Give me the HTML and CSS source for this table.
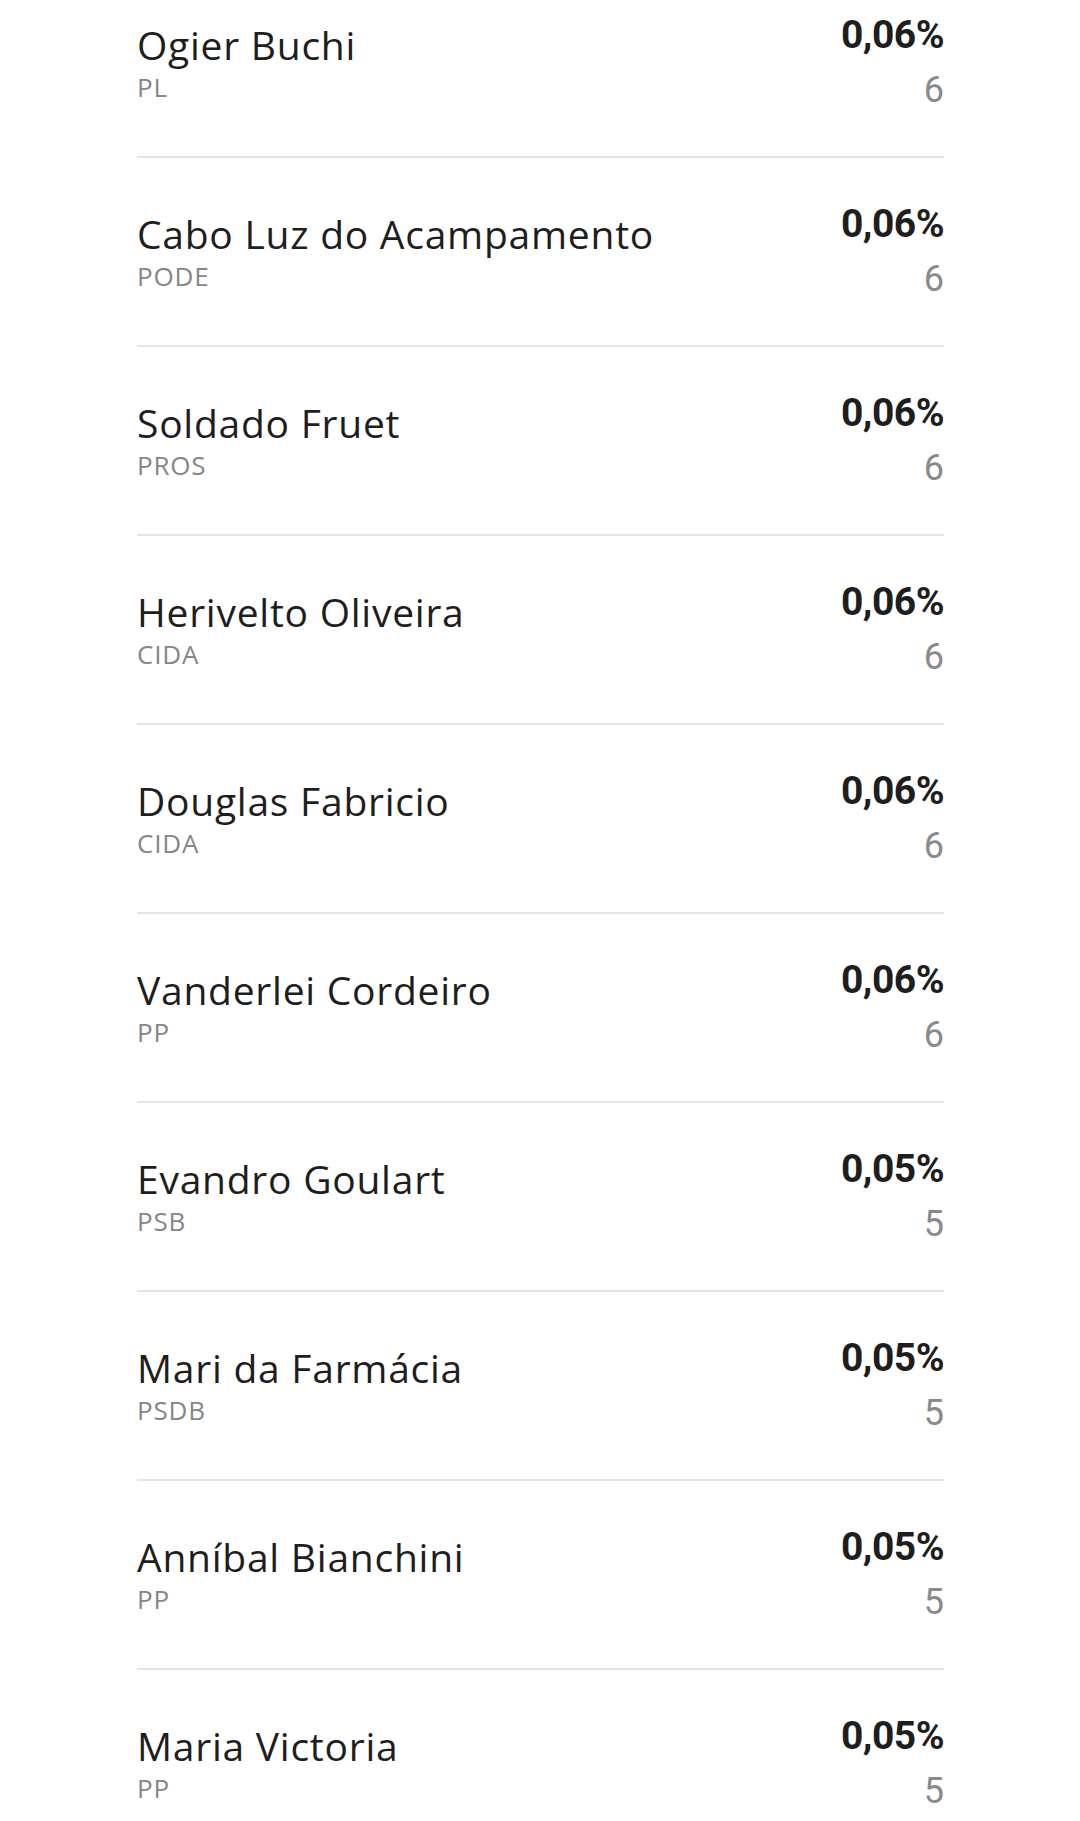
FILE: index.html
```html
<!DOCTYPE html>
<html lang="pt-BR">
<head>
<meta charset="utf-8">
<title>Resultados</title>
<link rel="stylesheet" href="styles.css">
</head>
<body>
<ul class="list">
  <li class="row"><div class="who"><div class="name">Ogier Buchi</div><div class="party">PL</div></div><div class="nums"><div class="pct">0,06%</div><div class="votes">6</div></div></li>
  <li class="row"><div class="who"><div class="name">Cabo Luz do Acampamento</div><div class="party">PODE</div></div><div class="nums"><div class="pct">0,06%</div><div class="votes">6</div></div></li>
  <li class="row"><div class="who"><div class="name">Soldado Fruet</div><div class="party">PROS</div></div><div class="nums"><div class="pct">0,06%</div><div class="votes">6</div></div></li>
  <li class="row"><div class="who"><div class="name">Herivelto Oliveira</div><div class="party">CIDA</div></div><div class="nums"><div class="pct">0,06%</div><div class="votes">6</div></div></li>
  <li class="row"><div class="who"><div class="name">Douglas Fabricio</div><div class="party">CIDA</div></div><div class="nums"><div class="pct">0,06%</div><div class="votes">6</div></div></li>
  <li class="row"><div class="who"><div class="name">Vanderlei Cordeiro</div><div class="party">PP</div></div><div class="nums"><div class="pct">0,06%</div><div class="votes">6</div></div></li>
  <li class="row"><div class="who"><div class="name">Evandro Goulart</div><div class="party">PSB</div></div><div class="nums"><div class="pct">0,05%</div><div class="votes">5</div></div></li>
  <li class="row"><div class="who"><div class="name">Mari da Farmácia</div><div class="party">PSDB</div></div><div class="nums"><div class="pct">0,05%</div><div class="votes">5</div></div></li>
  <li class="row"><div class="who"><div class="name">Anníbal Bianchini</div><div class="party">PP</div></div><div class="nums"><div class="pct">0,05%</div><div class="votes">5</div></div></li>
  <li class="row"><div class="who"><div class="name">Maria Victoria</div><div class="party">PP</div></div><div class="nums"><div class="pct">0,05%</div><div class="votes">5</div></div></li>
</ul>
</body>
</html>
```

FILE: styles.css
```css
html, body {
  margin: 0;
  padding: 0;
  background: #ffffff;
  overflow: hidden;
}
body {
  font-family: "Open Sans", "Noto Sans", sans-serif;
}
.list {
  list-style: none;
  margin: -31px 136px 0 137px;
  padding: 0;
}
.row {
  display: flex;
  justify-content: space-between;
  align-items: flex-start;
  height: 187px;
  box-sizing: content-box;
  border-bottom: 2px solid #e4e4e4;
}
.who {
  padding-top: 53px;
}
.name {
  font-size: 39px;
  line-height: 46px;
  color: #1e1e1e;
  letter-spacing: 0.75px;
  white-space: nowrap;
}
.party {
  margin-top: 4px;
  font-size: 26px;
  line-height: 30px;
  color: #868686;
  letter-spacing: 0.8px;
}
.nums {
  padding-top: 43px;
  text-align: right;
  font-family: Roboto, "Liberation Sans", sans-serif;
}
.pct {
  font-size: 39px;
  line-height: 46px;
  font-weight: 700;
  color: #1e1e1e;
  letter-spacing: -0.5px;
}
.votes {
  margin-top: 12px;
  font-size: 36px;
  line-height: 40px;
  color: #8a8a8a;
}
```
